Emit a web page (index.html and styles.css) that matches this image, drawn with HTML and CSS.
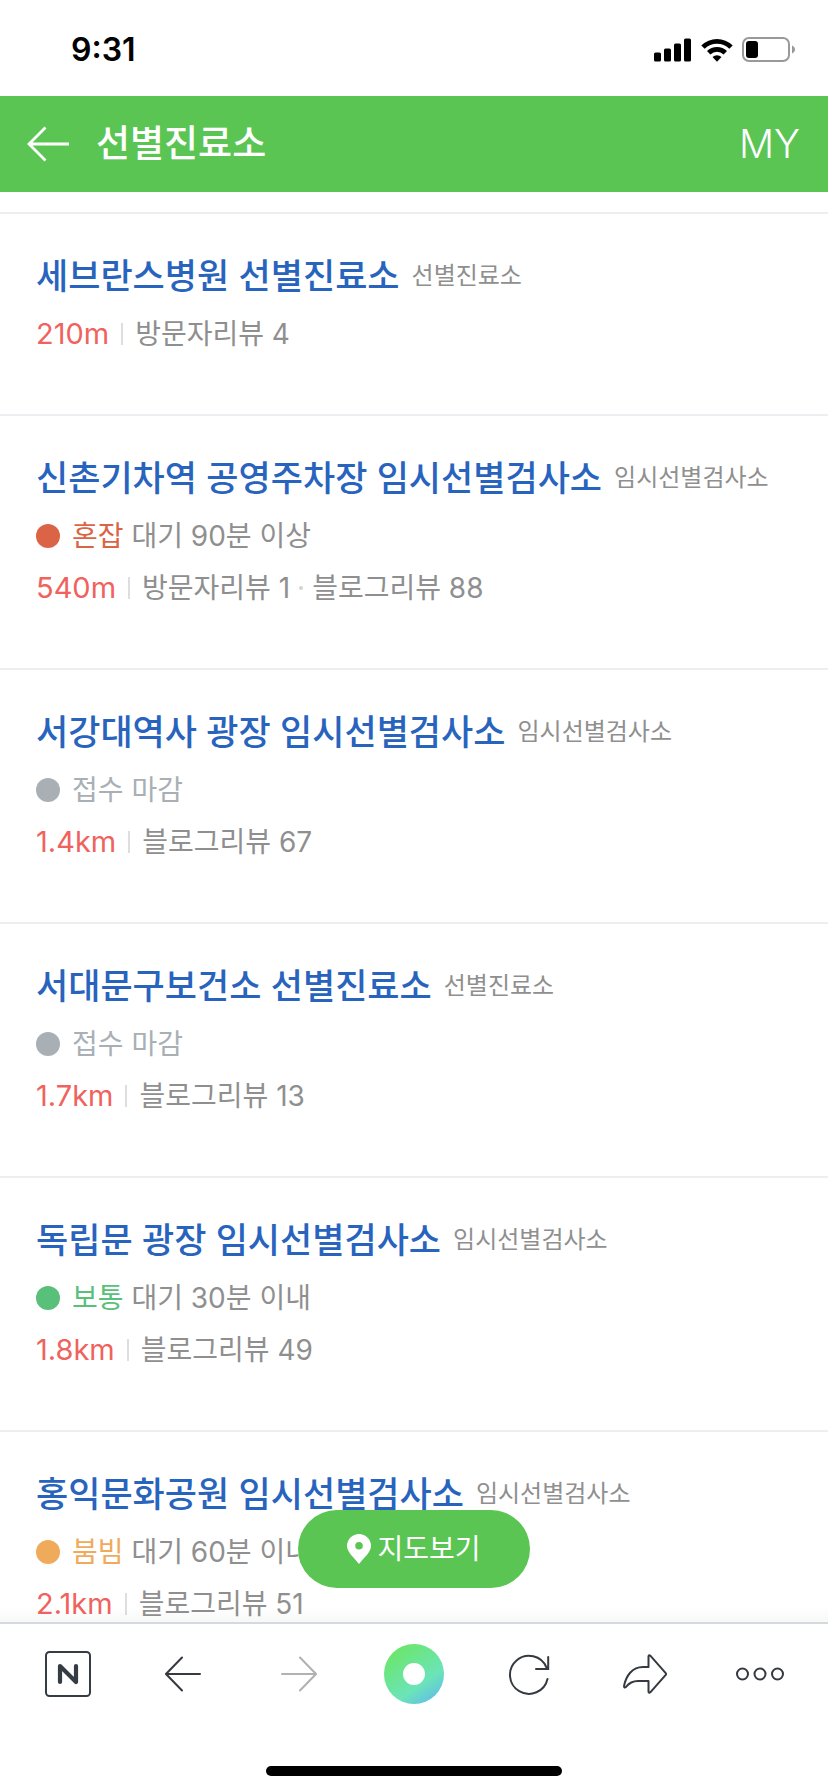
FILE: index.html
```html
<!DOCTYPE html>
<html lang="ko">
<head>
<meta charset="utf-8">
<meta name="viewport" content="width=device-width, initial-scale=1">
<title>선별진료소</title>
<link rel="stylesheet" href="styles.css">
</head>
<body>
<div class="app">
  <div class="status-bar">
    <span class="clock">9:31</span>
    <div class="indicators">
      <svg width="38" height="24" viewBox="0 0 38 24" aria-hidden="true"><rect x="0" y="14.5" width="7" height="9" rx="1.6"/><rect x="10" y="10.500" width="7" height="13" rx="1.600"/><rect x="20" y="5.500" width="7" height="18" rx="1.600"/><rect x="30" y="0.500" width="7" height="23" rx="1.600"/></svg>
      <svg width="32" height="24" viewBox="0 0 32 24" aria-hidden="true"><path d="M0.300 7.400a22.400 22.400 0 0 1 31.400 0L28.300 10.800a17.600 17.600 0 0 0-24.600 0Z"/><path d="M6 13.100a14.300 14.300 0 0 1 20 0L22.600 16.500a9.500 9.500 0 0 0-13.200 0Z"/><path d="M11.500 19a6.600 6.600 0 0 1 9 0L16 23.800Z"/></svg>
      <svg width="54" height="26" viewBox="0 0 54 26" aria-hidden="true"><rect x="1" y="1" width="46" height="23" rx="6" fill="none" stroke="#999" stroke-width="2"/><rect x="4" y="4" width="12" height="17" rx="3"/><path d="M50 8.500c4 1.500 4 6.500 0 8Z" fill="#999"/></svg>
    </div>
  </div>

  <header class="header">
    <button class="header-back" type="button" aria-label="뒤로">
      <svg width="42" height="36" viewBox="0 0 42 36" fill="none" stroke="#fff" stroke-width="2.800" aria-hidden="true"><path d="M42 18H2M18.500 1.500 2 18l16.500 16.500"/></svg>
    </button>
    <h1 class="header-title">선별진료소</h1>
    <a class="header-my" href="#">MY</a>
  </header>

  <main class="content">
    <ul class="places">
      <li class="place">
        <div class="place-head"><a class="place-name" href="#">세브란스병원 선별진료소</a><span class="place-type">선별진료소</span></div>
        <div class="place-meta"><span class="distance">210m</span><span class="bar"></span><span>방문자리뷰 4</span></div>
      </li>
      <li class="place">
        <div class="place-head"><a class="place-name" href="#">신촌기차역 공영주차장 임시선별검사소</a><span class="place-type">임시선별검사소</span></div>
        <div class="place-status crowded"><span class="dot"></span><span><b class="level">혼잡</b> 대기 90분 이상</span></div>
        <div class="place-meta"><span class="distance">540m</span><span class="bar"></span><span>방문자리뷰 1</span><span class="middot"></span><span>블로그리뷰 88</span></div>
      </li>
      <li class="place">
        <div class="place-head"><a class="place-name" href="#">서강대역사 광장 임시선별검사소</a><span class="place-type">임시선별검사소</span></div>
        <div class="place-status closed"><span class="dot"></span><b class="level">접수 마감</b></div>
        <div class="place-meta"><span class="distance">1.4km</span><span class="bar"></span><span>블로그리뷰 67</span></div>
      </li>
      <li class="place">
        <div class="place-head"><a class="place-name" href="#">서대문구보건소 선별진료소</a><span class="place-type">선별진료소</span></div>
        <div class="place-status closed"><span class="dot"></span><b class="level">접수 마감</b></div>
        <div class="place-meta"><span class="distance">1.7km</span><span class="bar"></span><span>블로그리뷰 13</span></div>
      </li>
      <li class="place">
        <div class="place-head"><a class="place-name" href="#">독립문 광장 임시선별검사소</a><span class="place-type">임시선별검사소</span></div>
        <div class="place-status normal"><span class="dot"></span><span><b class="level">보통</b> 대기 30분 이내</span></div>
        <div class="place-meta"><span class="distance">1.8km</span><span class="bar"></span><span>블로그리뷰 49</span></div>
      </li>
      <li class="place">
        <div class="place-head"><a class="place-name" href="#">홍익문화공원 임시선별검사소</a><span class="place-type">임시선별검사소</span></div>
        <div class="place-status busy"><span class="dot"></span><span><b class="level">붐빔</b> 대기 60분 이내</span></div>
        <div class="place-meta"><span class="distance">2.1km</span><span class="bar"></span><span>블로그리뷰 51</span></div>
      </li>
    </ul>
    <button class="map-button" type="button">
      <svg width="24" height="30" viewBox="0 0 24 30" aria-hidden="true"><path fill="#fff" fill-rule="evenodd" d="M12 0a12 12 0 0 1 12 12c0 6-6.500 11-12 18C6.500 23 0 18 0 12A12 12 0 0 1 12 0Zm0 8a3.800 3.800 0 1 0 0 7.600A3.800 3.800 0 0 0 12 8Z"/></svg>
      지도보기
    </button>
  </main>

  <footer class="browser-bar">
    <nav class="tools" aria-label="브라우저">
      <button class="tool" type="button" aria-label="네이버 홈"><svg width="46" height="46" viewBox="0 0 46 46" fill="none" stroke="#353c43" stroke-linecap="round" stroke-linejoin="round" aria-hidden="true"><rect x="1" y="1" width="44" height="44" rx="3.500" stroke-width="2"/><path d="M15 31V15L31 31V15" stroke-width="4.200"/></svg></button>
      <button class="tool" type="button" aria-label="이전"><svg width="36" height="36" viewBox="0 0 36 36" fill="none" stroke="#353a40" stroke-width="2" stroke-linecap="round" aria-hidden="true"><path d="M35 18H1M17 1.500 1 18 17 34.500"/></svg></button>
      <button class="tool" type="button" aria-label="다음" disabled><svg width="36" height="36" viewBox="0 0 36 36" fill="none" stroke="#b0b1b3" stroke-width="2" stroke-linecap="round" aria-hidden="true"><path d="M1 18H35M19 1.500 35 18 19 34.500"/></svg></button>
      <button class="tool" type="button" aria-label="그린닷"><span class="green-dot"></span></button>
      <button class="tool" type="button" aria-label="새로고침"><svg width="42" height="42" viewBox="0 0 42 42" fill="none" stroke="#353a40" stroke-width="2" stroke-linecap="round" aria-hidden="true"><path d="M39.500 26A19 19 0 1 1 38.500 14.500M40.200 4V16H28"/></svg></button>
      <button class="tool" type="button" aria-label="공유"><svg width="44" height="40" viewBox="0 0 44 40" fill="none" stroke="#353a40" stroke-width="2" stroke-linejoin="round" aria-hidden="true"><path d="M25.500 13V2.200q.6-1.600 1.800-.5L42.500 18.800q1 1.200 0 2.400L27.300 38.300q-1.200 1.100-1.800-.5V27H15C9 27 6 29 3 33q-1.800 1.400-2-.8C3 22 9 13 20 13Z"/></svg></button>
      <button class="tool" type="button" aria-label="더보기"><svg width="50" height="14" viewBox="0 0 50 14" fill="none" stroke="#353a40" stroke-width="2" aria-hidden="true"><circle cx="7.500" cy="7" r="5.500"/><circle cx="25" cy="7" r="5.500"/><circle cx="42.500" cy="7" r="5.500"/></svg></button>
    </nav>
    <div class="home-indicator"></div>
  </footer>
</div>
</body>
</html>
```
FILE: styles.css
```css
* {
  box-sizing: border-box;
}

body {
  margin: 0;
  background: #fff;
  color: #8f8f8f;
  font-family: Inter, "Noto Sans CJK KR", sans-serif;
  font-size: 28px;
  line-height: 48px;
}

button {
  border: 0;
  padding: 0;
  background: none;
  font: inherit;
}

a {
  color: inherit;
  text-decoration: none;
}

svg,
.green-dot {
  display: block;
  flex: none;
}

.app {
  display: flex;
  flex-direction: column;
  height: 100vh;
  overflow: hidden;
}

.status-bar {
  display: flex;
  align-items: center;
  justify-content: space-between;
  flex: none;
  height: 96px;
  padding: 3px 32px 0 71px;
}

.clock {
  color: #000;
  font-size: 32px;
  font-weight: 600;
}

.indicators {
  display: flex;
  align-items: center;
  gap: 9px;
}

.header {
  display: flex;
  align-items: center;
  flex: none;
  height: 96px;
  padding: 0 28px 0 27px;
  background: #5ac553;
  color: #fff;
}

.header-title {
  flex: 1;
  margin: 0 0 0 27px;
  font-size: 37px;
  font-weight: 500;
}

.header-my {
  font-size: 39px;
  font-weight: 300;
}

.content {
  position: relative;
  flex: 1;
  min-height: 0;
  overflow: hidden;
}

.content::after {
  content: "";
  position: absolute;
  inset: auto 0 0;
  height: 14px;
  background: linear-gradient(transparent, rgba(90, 110, 100, 0.05));
}

.places {
  margin: 0;
  padding: 20px 0 0;
  list-style: none;
}

.place {
  padding: 38px 36px 54px;
  border-top: 2px solid #eceef1;
}

.place-head {
  display: flex;
  align-items: center;
  gap: 12px;
  height: 48px;
  margin-bottom: 8px;
  white-space: nowrap;
}

.place-name {
  color: #2864be;
  font-size: 35px;
  font-weight: 500;
}

.place-type {
  font-size: 24px;
}

.place-status,
.place-meta {
  display: flex;
  align-items: center;
  height: 52px;
  white-space: nowrap;
}

.place-status {
  gap: 12px;
}

.level {
  color: var(--level);
  font-weight: 400;
}

.dot {
  width: 24px;
  height: 24px;
  border-radius: 50%;
  background: var(--level);
}

.crowded { --level: #dc6446; }
.closed { --level: #a8afb5; }
.normal { --level: #58c079; }
.busy { --level: #f0aa5c; }

.distance {
  color: #f0625d;
  font-size: 29px;
}

.bar {
  width: 2px;
  height: 22px;
  margin: 0 12px;
  background: #dedede;
}

.middot {
  width: 4px;
  height: 4px;
  margin: 0 9px;
  border-radius: 50%;
  background: #d4d4d4;
}

.map-button {
  position: absolute;
  bottom: 34px;
  left: 50%;
  display: flex;
  align-items: center;
  justify-content: center;
  gap: 6px;
  width: 232px;
  height: 78px;
  border-radius: 39px;
  background: #5ac553;
  color: #fff;
  transform: translateX(-50%);
}

.browser-bar {
  flex: none;
  border-top: 2px solid #d5d8dd;
  background: #fff;
}

.tools {
  display: grid;
  grid-template-columns: repeat(7, 1fr);
  height: 100px;
  padding: 0 10px;
}

.tool {
  display: flex;
  align-items: center;
  justify-content: center;
}

.green-dot {
  width: 60px;
  height: 60px;
  border: 19px solid transparent;
  border-radius: 50%;
  background: linear-gradient(#fff, #fff) padding-box, linear-gradient(145deg, #6be66e 15%, #6be4b8 65%, #5fb8ee 95%) border-box;
}

.home-indicator {
  width: 296px;
  height: 10px;
  margin: 42px auto 16px;
  border-radius: 5px;
  background: #000;
}
```
